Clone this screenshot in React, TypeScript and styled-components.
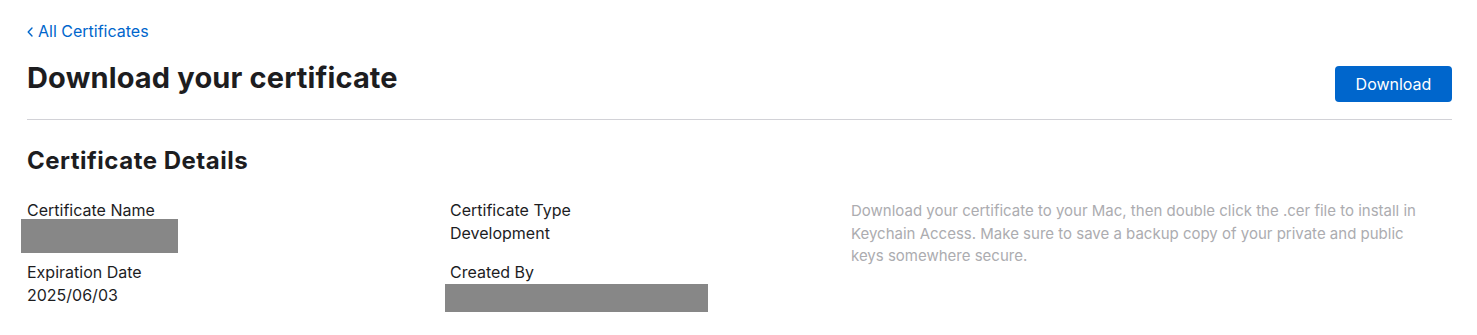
import React from "react";
import styled, { createGlobalStyle } from "styled-components";

const Global = createGlobalStyle`
  html, body { margin: 0; padding: 0; background: #ffffff; }
  body {
    font-family: Inter, "Noto Sans", "Liberation Sans", sans-serif;
    color: #1d1d1f;
    -webkit-font-smoothing: antialiased;
  }
`;

const Page = styled.div`
  padding: 0 25px 0 27px;
`;

const BackLink = styled.a`
  display: inline-flex;
  align-items: center;
  gap: 5px;
  margin-top: 21px;
  font-size: 16px;
  line-height: 20px;
  color: #0066cc;
  text-decoration: none;
  cursor: pointer;
`;

const Chevron = styled.svg`
  width: 6px;
  height: 10px;
  margin-top: 1px;
`;

const Header = styled.div`
  display: flex;
  justify-content: space-between;
  align-items: flex-start;
  margin-top: 20px;
  padding-bottom: 17px;
  border-bottom: 1px solid #d2d2d7;
`;

const Title = styled.h1`
  margin: 0;
  font-size: 29px;
  line-height: 34px;
  font-weight: 700;
  letter-spacing: 0.15px;
  color: #1d1d1f;
`;

const Button = styled.button`
  margin-top: 5px;
  width: 117px;
  height: 36px;
  border: none;
  border-radius: 4px;
  background: #0066cc;
  color: #ffffff;
  font-family: inherit;
  font-size: 16px;
  cursor: pointer;
`;

const SectionTitle = styled.h2`
  margin: 27px 0 0;
  font-size: 24px;
  line-height: 28px;
  font-weight: 700;
  letter-spacing: 0.5px;
  color: #1d1d1f;
`;

const DetailsGrid = styled.div`
  display: grid;
  grid-template-columns: 423px 401px 1fr;
  grid-template-rows: auto auto;
  row-gap: 8px;
  margin-top: 24px;
`;

const Field = styled.div`
  display: flex;
  flex-direction: column;
  font-size: 16px;
  line-height: 22px;
`;

const Label = styled.div`
  color: #1d1d1f;
`;

const Value = styled.div`
  color: #1d1d1f;
  line-height: 24px;
`;

const Redacted = styled.div<{ $w: number; $h: number; $offset: number; $top: number }>`
  width: ${(p) => p.$w}px;
  height: ${(p) => p.$h}px;
  margin-left: ${(p) => p.$offset}px;
  margin-top: ${(p) => p.$top}px;
  background: #878787;
`;

const Description = styled.p`
  grid-column: 3;
  grid-row: 1 / span 2;
  margin: 1px 0 0;
  font-size: 15px;
  line-height: 22.5px;
  color: #acacb0;
  white-space: nowrap;
`;

export default function App() {
  return (
    <>
      <Global />
      <Page>
        <BackLink>
          <Chevron viewBox="0 0 6 10" fill="none">
            <path d="M5 1L1.2 5L5 9" stroke="#0066cc" strokeWidth="1.4" strokeLinecap="round" strokeLinejoin="round" />
          </Chevron>
          All Certificates
        </BackLink>
        <Header>
          <Title>Download your certificate</Title>
          <Button>Download</Button>
        </Header>
        <SectionTitle>Certificate Details</SectionTitle>
        <DetailsGrid>
          <Field>
            <Label>Certificate Name</Label>
            <Redacted $w={157} $h={34} $offset={-6} $top={-2} />
          </Field>
          <Field>
            <Label>Certificate Type</Label>
            <Value>Development</Value>
          </Field>
          <Description>
            Download your certificate to your Mac, then double click the .cer file to install in
            <br />
            Keychain Access. Make sure to save a backup copy of your private and public
            <br />
            keys somewhere secure.
          </Description>
          <Field>
            <Label>Expiration Date</Label>
            <Value>2025/06/03</Value>
          </Field>
          <Field>
            <Label>Created By</Label>
            <Redacted $w={263} $h={28} $offset={-5} $top={1} />
          </Field>
        </DetailsGrid>
      </Page>
    </>
  );
}
